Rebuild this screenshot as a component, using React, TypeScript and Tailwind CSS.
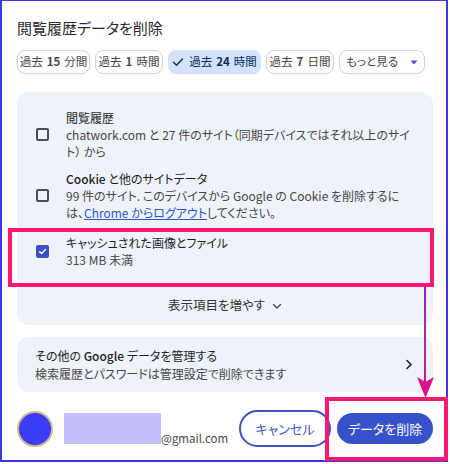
import React from "react";

const font = {
  fontFamily: '"Noto Sans CJK JP", "Noto Sans", sans-serif',
};

function Chip({ w, children, selected }: { w: string; children: React.ReactNode; selected?: boolean }) {
  return (
    <div
      className={
        "h-[24px] rounded-[8px] flex items-center justify-center text-[11.5px] leading-none whitespace-nowrap " +
        w +
        (selected
          ? " bg-[#d3e3fd] text-[#0a2a5c]"
          : " border border-[#cfd3da] text-[#444746] bg-white")
      }
    >
      {children}
    </div>
  );
}

function Num({ children }: { children: React.ReactNode }) {
  return <span className="font-semibold mx-[4px]">{children}</span>;
}

function Box({ checked }: { checked?: boolean }) {
  return checked ? (
    <div className="w-[13px] h-[13px] rounded-[2px] bg-[#3a52c9] flex items-center justify-center">
      <svg width="9" height="9" viewBox="0 0 10 10" fill="none">
        <path d="M1.8 5.2 L4 7.3 L8.3 2.8" stroke="white" strokeWidth="1.5" strokeLinecap="round" strokeLinejoin="round" />
      </svg>
    </div>
  ) : (
    <div className="w-[13px] h-[13px] rounded-[2px] border-2 border-[#4a4d50]" />
  );
}

export default function App() {
  return (
    <div className="relative w-[450px] h-[464px] bg-white overflow-hidden [font-feature-settings:'palt']" style={font}>
      <div className="w-[448px] h-[462px] border-t border-l-2 border-r-2 border-b-2 border-[#3d34e6] bg-white flex flex-col pl-[15px] pr-[13px]">
        <div className="mt-[16px] h-[20px] flex items-center text-[15px] text-[#2a2a2a] leading-none">
          閲覧履歴データを削除
        </div>

        <div className="mt-[13px] flex gap-[5px]">
          <Chip w="w-[73px]">過去<Num>15</Num>分間</Chip>
          <Chip w="w-[68px]">過去<Num>1</Num>時間</Chip>
          <Chip w="w-[93px]" selected>
            <svg width="12" height="12" viewBox="0 0 12 12" fill="none" className="mr-[5px]">
              <path d="M1.5 6.3 L4.5 9.2 L10.5 3" stroke="#1f2a44" strokeWidth="1.4" strokeLinecap="round" strokeLinejoin="round" />
            </svg>
            過去<Num>24</Num>時間
          </Chip>
          <Chip w="w-[68px]">過去<Num>7</Num>日間</Chip>
          <Chip w="w-[86px]">
            もっと見る
            <svg width="8" height="5" viewBox="0 0 8 5" className="ml-[12px]">
              <path d="M0.5 0.5 L7.5 0.5 L4 4.5 Z" fill="#3b5bd6" />
            </svg>
          </Chip>
        </div>

        <div className="mt-[18px] h-[233px] rounded-[12px] bg-[#eef2f9] flex flex-col pt-[17px] text-[12px] leading-[17px]">
          <div className="flex items-center">
            <div className="w-[49px] pl-[19px] shrink-0">
              <Box />
            </div>
            <div className="whitespace-nowrap">
              <div className="text-[#1f1f1f]">閲覧履歴</div>
              <div className="text-[#474747]">
                chatwork.com と 27 件のサイト（同期デバイスではそれ以上のサイ
                <br />
                ト） から
              </div>
            </div>
          </div>

          <div className="mt-[10px] flex items-center">
            <div className="w-[49px] pl-[19px] shrink-0">
              <Box />
            </div>
            <div className="whitespace-nowrap">
              <div className="text-[#1f1f1f]">
                <span className="font-medium">Cookie</span> と他のサイトデータ
              </div>
              <div className="text-[#474747]">
                99 件のサイト. このデバイスから Google の Cookie を削除するに
                <br />
                は、<span className="text-[#2f56d0] underline">Chrome からログアウト</span>してください。
              </div>
            </div>
          </div>

          <div className="mt-[13px] flex items-center">
            <div className="w-[49px] pl-[19px] shrink-0">
              <Box checked />
            </div>
            <div className="whitespace-nowrap">
              <div className="text-[#1f1f1f]">キャッシュされた画像とファイル</div>
              <div className="text-[#474747]">313 MB 未満</div>
            </div>
          </div>

          <div className="mt-[28px] flex items-center justify-center text-[12.5px] text-[#333]">
            表示項目を増やす
            <svg width="10" height="7" viewBox="0 0 10 7" fill="none" className="ml-[7px] mt-[3px]">
              <path d="M1.5 1.5 L5 5 L8.5 1.5" stroke="#444" strokeWidth="1.3" strokeLinecap="round" strokeLinejoin="round" />
            </svg>
          </div>
        </div>

        <div className="mt-[12px] h-[55px] rounded-[12px] bg-[#eef2f9] flex items-center pl-[18px] pr-[20px] text-[12px] leading-[18px]">
          <div className="flex-1 whitespace-nowrap">
            <div className="text-[#1f1f1f]">
              その他の <span className="font-medium">Google</span> データを管理する
            </div>
            <div className="text-[#474747]">検索履歴とパスワードは管理設定で削除できます</div>
          </div>
          <svg width="8" height="11" viewBox="0 0 8 11" fill="none">
            <path d="M2 1.5 L6 5.5 L2 9.5" stroke="#222" strokeWidth="1.6" strokeLinecap="round" strokeLinejoin="round" />
          </svg>
        </div>

        <div className="mt-[18px] flex items-center">
          <div className="w-[36px] h-[36px] rounded-full bg-[#3c3cf6] border-[2px] border-[#c9bb92] shrink-0" />
          <div className="ml-[11px] flex items-end">
            <div className="w-[97px] h-[31px] bg-[#c2c0fb]" />
            <div className="text-[11.5px] leading-[14px] text-[#474747] mb-[-1px]">@gmail.com</div>
          </div>
          <div className="ml-auto flex items-center gap-[6px]">
            <div className="w-[92px] h-[37px] rounded-full border-2 border-[#3e52c4] flex items-center justify-center text-[13px] text-[#4a59b8]">
              キャンセル
            </div>
            <div className="w-[96px] h-[31px] rounded-full bg-[#3651c9] flex items-center justify-center text-[13px] text-white">
              データを削除
            </div>
          </div>
        </div>
      </div>

      {/* annotations */}
      <div className="absolute left-[8px] top-[228px] w-[426px] h-[59px] border-[4px] border-[#ff1770]" />
      <div className="absolute left-[325px] top-[397px] w-[123px] h-[64px] border-[4px] border-[#ff1770]" />
      <div className="absolute left-[424px] top-[287px] w-[2px] h-[95px] bg-gradient-to-b from-[#8a1fc4] to-[#d4138f]" />
      <svg className="absolute left-[417px] top-[377px]" width="17" height="21" viewBox="0 0 17 21">
        <path d="M0 0 L8.5 5 L17 0 L8.5 21 Z" fill="#d8128a" />
      </svg>
    </div>
  );
}
